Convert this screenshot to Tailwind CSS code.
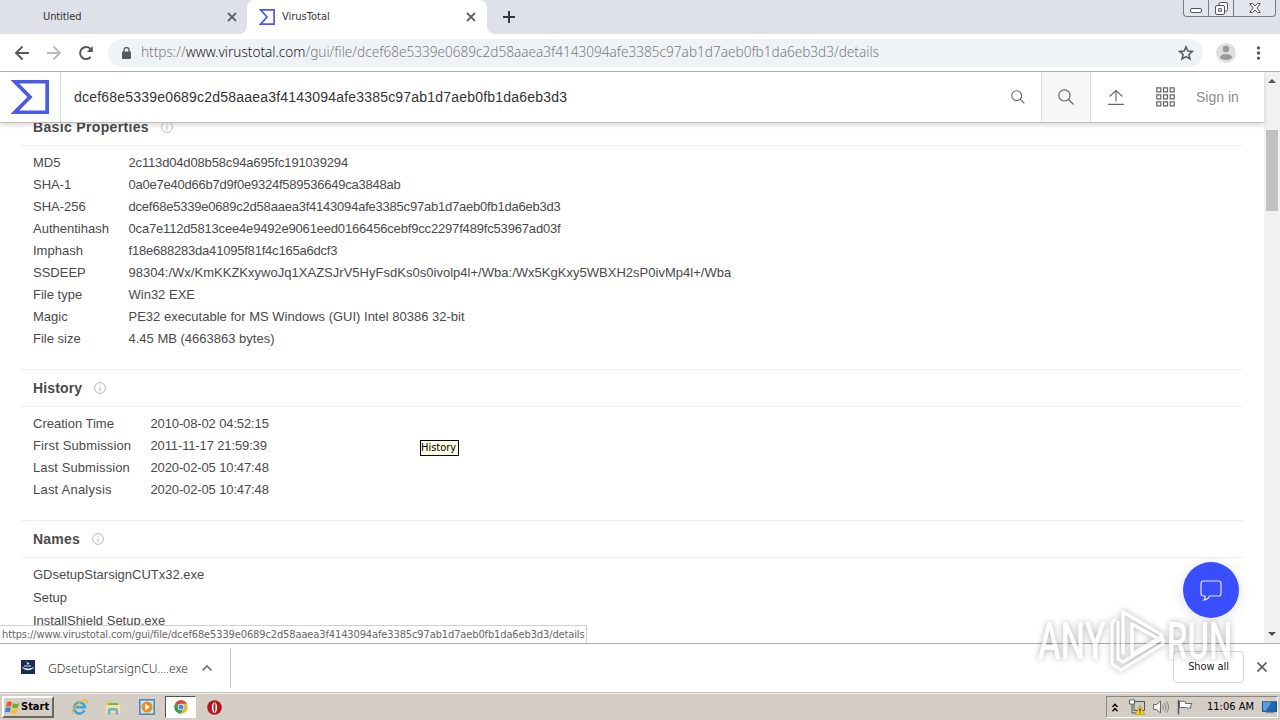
<!DOCTYPE html>
<html lang="en">
<head>
    <meta charset="UTF-8">
    <meta name="viewport" content="width=device-width, initial-scale=1.0">
    <title>VirusTotal</title>
    <script src="https://cdn.jsdelivr.net/npm/@tailwindcss/browser@4"></script>
</head>
<body class="relative flex h-[720px] w-[1280px] flex-col overflow-hidden bg-white font-['DejaVu_Sans_Condensed','Noto_Sans',sans-serif] text-[11px] text-[#333]">

    <!-- tab strip -->
    <div class="flex h-[34px] shrink-0 justify-between bg-[#dee1e9]">
        <div class="flex">
            <div class="flex w-[247px] items-center justify-between pr-[10px] pl-[43px]">
                <span class="pt-px tracking-[-0.1px] whitespace-nowrap">Untitled</span>
                <svg class="size-[10px]" viewBox="0 0 10 10" fill="none" stroke="#5f6368" stroke-width="1.8"><path d="M1 1l8 8M9 1l-8 8"/></svg>
            </div>
            <div class="relative flex w-[240px] items-center rounded-t-lg bg-white pr-[11px] pl-3">
                <svg class="absolute bottom-0 -left-2 size-2" viewBox="0 0 8 8"><path d="M8 0v8H0a8 8 0 0 0 8-8z" fill="#fff"/></svg>
                <svg class="absolute -right-2 bottom-0 size-2" viewBox="0 0 8 8"><path d="M0 0v8h8a8 8 0 0 1-8-8z" fill="#fff"/></svg>
                <svg class="mr-[7px] h-4 w-4" viewBox="0 0 16 16" fill="none" stroke="#4a5ae8" stroke-width="1.7"><path d="M1.6.9h13.500v14.200H1.6L8 8z"/></svg>
                <span class="grow pt-px whitespace-nowrap">VirusTotal</span>
                <svg class="size-[10px]" viewBox="0 0 10 10" fill="none" stroke="#5f6368" stroke-width="1.8"><path d="M1 1l8 8M9 1l-8 8"/></svg>
            </div>
            <div class="flex items-center pl-4">
                <svg class="size-3" viewBox="0 0 12 12" fill="none" stroke="#33363b" stroke-width="2"><path d="M6 0v12M0 6h12"/></svg>
            </div>
        </div>
        <!-- window buttons -->
        <div class="mr-1 flex h-[17px] w-[93px] rounded-b-[4px] border border-t-0 border-[#777c86] bg-[#e3e6ec]">
            <div class="flex w-[25px] justify-center border-r border-[#777c86] pt-2">
                <svg class="h-[5px] w-3" viewBox="0 0 12 5"><rect x=".5" y=".5" width="11" height="4" rx="1.5" fill="#fff" stroke="#4e535c"/></svg>
            </div>
            <div class="flex w-[25px] justify-center border-r border-[#777c86] pt-[2px]">
                <svg class="size-[13px]" viewBox="0 0 13 13" fill="#fff" stroke="#4e535c"><rect x="4" y=".5" width="8.5" height="8.5" rx="1.5"/><rect x=".5" y="3.5" width="9" height="9" rx="1.5"/><rect x="3.7" y="6.7" width="2.6" height="2.6"/></svg>
            </div>
            <div class="flex grow justify-center pt-[3px]">
                <svg class="h-[10px] w-3" viewBox="0 0 12 10"><path d="M.8.6h3L6 3 8.200.6h3L7.900 5l3.300 4.400h-3L6 7 3.800 9.400h-3L4.100 5z" fill="#fff" stroke="#4e535c"/></svg>
            </div>
        </div>
    </div>

    <!-- toolbar -->
    <div class="flex h-[38px] shrink-0 items-center border-b border-[#adadad] pr-[19px] pl-[14px]">
        <svg class="mr-4 size-4" viewBox="0 0 16 16" fill="none" stroke="#55585c" stroke-width="1.9"><path d="M15 8H2M8.500 1.500L2 8l6.500 6.500"/></svg>
        <svg class="mr-4 size-4" viewBox="0 0 16 16" fill="none" stroke="#b9bbbe" stroke-width="1.9"><path d="M1 8h13M7.500 1.500L14 8l-6.500 6.500"/></svg>
        <svg class="mr-[14px] size-4" viewBox="0 0 16 16"><path d="M12.600 12A6 6 0 1 1 12.400 3.800" fill="none" stroke="#55585c" stroke-width="2"/><path d="M14.800 1v6H8.800z" fill="#55585c"/></svg>
        <div class="flex h-7 grow items-center rounded-full bg-[#f0f3f6] pr-[9px] pl-[14px]">
            <svg class="mr-[10px] h-3 w-[9px]" viewBox="0 0 9 12"><rect y="4.500" width="9" height="7.500" rx="1" fill="#55585c"/><path d="M2 5V3a2.500 2.500 0 0 1 5 0v2" fill="none" stroke="#55585c" stroke-width="1.300"/></svg>
            <span class="grow font-['Noto_Sans',sans-serif] text-[13.6px] font-light whitespace-nowrap text-[#777b80]">https://<span class="text-[#202124]">www.virustotal.com</span>/gui/file/dcef68e5339e0689c2d58aaea3f4143094afe3385c97ab1d7aeb0fb1da6eb3d3/details</span>
            <svg class="size-4" viewBox="0 0 16 16" fill="none" stroke="#55585c" stroke-width="1.500"><path d="M8 1.800l1.800 4.200 4.600.4-3.500 3 1.100 4.500L8 11.500l-4 2.400 1.100-4.500-3.500-3 4.600-.4z"/></svg>
        </div>
        <svg class="mr-5 ml-[13px] size-5" viewBox="0 0 20 20"><circle cx="10" cy="10" r="10" fill="#dfdfe0"/><circle cx="10" cy="6" r="3.300" fill="#98999b"/><ellipse cx="10" cy="14" rx="6" ry="3" fill="#98999b"/></svg>
        <svg class="h-[14px] w-[5px]" viewBox="0 0 5 14" fill="#55585c"><circle cx="2.500" cy="1.900" r="1.700"/><circle cx="2.500" cy="7" r="1.700"/><circle cx="2.500" cy="12.100" r="1.700"/></svg>
    </div>

    <!-- page -->
    <div class="flex h-[571px] shrink-0 overflow-hidden">
        <div class="flex w-[1264px] flex-col font-['Liberation_Sans',Arial,sans-serif] text-[13px] text-[#4a4a4a]">
            <header class="z-10 flex h-[51px] shrink-0 items-stretch border-b border-[#bfbfbf] bg-white shadow-[0_2px_5px_rgba(0,0,0,0.16)]">
                <div class="flex w-[61px] items-center border-r border-[#dcdcdc] pl-[11px]">
                    <svg class="h-[34px] w-[38px]" viewBox="0 0 37 34" preserveAspectRatio="none" fill="none" stroke="#4a5ae8" stroke-width="3.600"><path d="M3.800 1.800h31.400v30.400H3.800L18.500 17z"/></svg>
                </div>
                <div class="flex grow items-center justify-between pr-4 pl-[13px] text-[14px] text-[#333]">
                    <span class="tracking-[0.2px] whitespace-nowrap">dcef68e5339e0689c2d58aaea3f4143094afe3385c97ab1d7aeb0fb1da6eb3d3</span>
                    <svg class="size-[14px]" viewBox="0 0 14 14" fill="none" stroke="#666" stroke-width="1.100"><circle cx="5.700" cy="5.700" r="4.900"/><path d="M9.200 9.200l4.200 4.200"/></svg>
                </div>
                <div class="flex w-[50px] items-center justify-center border-x border-[#dcdcdc] bg-[#f7f7f7]">
                    <svg class="size-4" viewBox="0 0 16 16" fill="none" stroke="#666" stroke-width="1.200"><circle cx="6.400" cy="6.400" r="5.600"/><path d="M10.500 10.500l5 5"/></svg>
                </div>
                <div class="flex w-[173px] items-center pl-[17px]">
                    <svg class="mr-8 h-4 w-4" viewBox="0 0 16 16" fill="none" stroke="#666" stroke-width="1.100"><path d="M8 12.500V2M1.600 7.500L8 1.600l6.400 5.900M0 15.400h16"/></svg>
                    <svg class="mr-[21px] h-[20px] w-[19px]" viewBox="0 0 19 20" fill="none" stroke="#666" stroke-width="1.200"><path d="M.8.8h4v4h-4zM7.500.8h4v4h-4zM14.200.8h4v4h-4zM.8 7.800h4v4h-4zM7.500 7.800h4v4h-4zM14.200 7.800h4v4h-4zM.8 14.800h4v4h-4zM7.500 14.800h4v4h-4zM14.200 14.800h4v4h-4z"/></svg>
                    <span class="text-[14px] whitespace-nowrap text-[#8c8c8c]">Sign in</span>
                </div>
            </header>

            <main class="-mt-[14px] ml-[21px] w-[1223px] leading-[22px]">
                <h3 class="flex h-[37px] items-center border-b border-[#f0f0f0] pl-3 text-[14px] font-bold">
                    <span class="tracking-[0.34px]">Basic Properties</span>
                    <svg class="ml-3 size-3" viewBox="0 0 12 12" fill="none" stroke="#b8b8b8"><circle cx="6" cy="6" r="5.400"/><path d="M6 2.800v1.200M6 5v4.200"/></svg>
                </h3>
                <dl class="grid h-[223px] grid-cols-[95.5px_1fr] content-start pt-[6px] pl-3">
                    <dt>MD5</dt><dd class="tracking-[-0.16px]">2c113d04d08b58c94a695fc191039294</dd>
                    <dt>SHA-1</dt><dd class="tracking-[-0.23px]">0a0e7e40d66b7d9f0e9324f589536649ca3848ab</dd>
                    <dt>SHA-256</dt><dd class="tracking-[-0.22px]">dcef68e5339e0689c2d58aaea3f4143094afe3385c97ab1d7aeb0fb1da6eb3d3</dd>
                    <dt>Authentihash</dt><dd class="tracking-[-0.17px]">0ca7e112d5813cee4e9492e9061eed0166456cebf9cc2297f489fc53967ad03f</dd>
                    <dt>Imphash</dt><dd class="tracking-[-0.21px]">f18e688283da41095f81f4c165a6dcf3</dd>
                    <dt>SSDEEP</dt><dd class="tracking-[0.02px]">98304:/Wx/KmKKZKxywoJq1XAZSJrV5HyFsdKs0s0ivolp4l+/Wba:/Wx5KgKxy5WBXH2sP0ivMp4l+/Wba</dd>
                    <dt>File type</dt><dd>Win32 EXE</dd>
                    <dt>Magic</dt><dd>PE32 executable for MS Windows (GUI) Intel 80386 32-bit</dd>
                    <dt>File size</dt><dd>4.45 MB (4663863 bytes)</dd>
                </dl>

                <h3 class="flex h-[38px] items-center border-y border-[#f0f0f0] pl-3 text-[14px] font-bold">
                    <span class="tracking-[0.15px]">History</span>
                    <svg class="ml-3 size-3" viewBox="0 0 12 12" fill="none" stroke="#b8b8b8"><circle cx="6" cy="6" r="5.400"/><path d="M6 2.800v1.200M6 5v4.200"/></svg>
                </h3>
                <dl class="grid h-[113px] grid-cols-[117.5px_1fr] content-start pt-[6px] pl-3">
                    <dt>Creation Time</dt><dd class="tracking-[-0.13px]">2010-08-02 04:52:15</dd>
                    <dt class="tracking-[0.13px]">First Submission</dt><dd class="tracking-[-0.13px]">2011-11-17 21:59:39</dd>
                    <dt class="tracking-[0.1px]">Last Submission</dt><dd class="tracking-[-0.13px]">2020-02-05 10:47:48</dd>
                    <dt class="tracking-[0.22px]">Last Analysis</dt><dd class="tracking-[-0.13px]">2020-02-05 10:47:48</dd>
                </dl>

                <h3 class="flex h-[38px] items-center border-y border-[#f0f0f0] pl-3 text-[14px] font-bold">
                    <span class="tracking-[0.2px]">Names</span>
                    <svg class="ml-3 size-3" viewBox="0 0 12 12" fill="none" stroke="#b8b8b8"><circle cx="6" cy="6" r="5.400"/><path d="M6 2.800v1.200M6 5v4.200"/></svg>
                </h3>
                <ul class="pt-[5px] pl-3 leading-[23px]">
                    <li>GDsetupStarsignCUTx32.exe</li>
                    <li>Setup</li>
                    <li>InstallShield Setup.exe</li>
                </ul>
            </main>
        </div>
        <!-- scrollbar -->
        <div class="flex w-4 flex-col items-center justify-between bg-[#f1f1f1] py-[7px]">
            <svg class="h-1 w-2" viewBox="0 0 8 4"><path d="M0 4l4-4 4 4z" fill="#505050"/></svg>
            <div class="-mt-[374px] h-[81px] w-3 bg-[#c1c1c1]"></div>
            <svg class="h-1 w-2" viewBox="0 0 8 4"><path d="M0 0l4 4 4-4z" fill="#505050"/></svg>
        </div>
    </div>

    <!-- downloads bar -->
    <div class="flex h-[49px] shrink-0 items-center justify-between border-t border-[#adadad] bg-white pr-[13px]">
        <div class="flex h-[40px] w-[231px] items-center border-r border-[#c9c9c9] pl-[21px]">
            <svg class="mr-[13px] mb-[2px] size-[14px]" viewBox="0 0 14 14"><rect width="14" height="14" fill="#1b2a52"/><path d="M1 6.500c1 5 11 5 12 0-2 2.500-9.500 2.500-12 0z" fill="#dbe6f7"/><path d="M5.500 1.500l3 2-2 1.500z" fill="#dbe6f7"/><path d="M3 6h7" stroke="#dbe6f7"/></svg>
            <span class="mr-[14px] pt-[3px] font-['Noto_Sans',sans-serif] text-[12.1px] whitespace-nowrap text-[#333] font-light">GDsetupStarsignCU....exe</span>
            <svg class="h-[6px] w-[10px]" viewBox="0 0 10 6" fill="none" stroke="#6b6e72" stroke-width="1.600"><path d="M.6 5.400L5 1l4.400 4.400"/></svg>
        </div>
        <div class="flex items-center gap-[13px] pb-[2px]">
            <div class="flex h-8 w-[71px] items-center justify-center rounded-[4px] border border-[#d4d6d9] tracking-[-0.1px] text-[#222]">Show all</div>
            <svg class="size-[10px]" viewBox="0 0 10 10" fill="none" stroke="#5f6368" stroke-width="1.800"><path d="M.5.5l9 9M9.500.5l-9 9"/></svg>
        </div>
    </div>

    <!-- taskbar -->
    <div class="flex h-[28px] shrink-0 items-center justify-between border-t border-[#c2c1bc] bg-[#d5cec6] pl-[2px] text-black shadow-[inset_0_1px_0_#f2f0ec]">
        <div class="flex items-center pt-px">
            <div class="flex h-[22px] w-[52px] items-center border-2 border-t-white border-r-[#6b6862] border-b-[#6b6862] border-l-white pl-px">
                <svg class="mr-px h-[15px] w-[15px] shrink-0" viewBox="0 0 15 14"><path d="M2 2q2.500-2 5 0L6 6.500q-2.500-1.500-5 0z" fill="#e8572b"/><path d="M8 2.500q3 1.800 6 0L13 7q-3 1.500-6 0z" fill="#6fae31"/><path d="M.8 7.500q2.500-1.500 5 0L4.800 12q-2.500-1.500-5 0z" fill="#3c82cc"/><path d="M6.800 8q3 1.800 6 0l-1 4.500q-3 1.500-6 0z" fill="#f5bf25"/></svg>
                <span class="text-[11px] font-bold">Start</span>
            </div>
            <svg class="ml-[17px] size-[17px]" viewBox="0 0 17 17" fill="none"><path d="M13.500 11.500a5.500 5.500 0 1 1 .5-3.200H4" stroke="#3fa6dc" stroke-width="2.600"/><path d="M2 15.500C-2 12 11-1 15.500 1.500c1 .8.500 2-.2 3" stroke="#e8b62c" stroke-width="1.300"/></svg>
            <svg class="ml-[17px] h-4 w-4" viewBox="0 0 16 16"><path d="M1 2h5l1 1.500h7V13H1z" fill="#e8cc6a"/><path d="M3 4h10v3H3z" fill="#5fbd77"/><path d="M.5 6h15L14.500 14h-13z" fill="#f6e396"/><path d="M3 15.500V11q0-2 2-2h6q2 0 2 2v4.500h-2.500V11.500h-5v4z" fill="#6cb4dd"/></svg>
            <svg class="ml-[18px] h-4 w-4" viewBox="0 0 16 16"><rect x=".5" y=".5" width="15" height="15" fill="#75b3dd" stroke="#4d87b4"/><rect x="2" y="2" width="12" height="12" fill="#cfe4f2"/><circle cx="8" cy="8" r="5.500" fill="#f08a1c"/><path d="M6.200 4.800l5 3.200-5 3.200z" fill="#fff"/></svg>
            <div class="ml-[10px] flex h-[22px] w-[31px] items-center justify-center border border-t-[#55524d] border-r-white border-b-white border-l-[#55524d] bg-white">
                <svg class="size-[14px]" viewBox="0 0 14 14"><circle cx="7" cy="7" r="6.700" fill="#e3b92e"/><path d="M7 7L1.200 3.700A6.700 6.700 0 0 1 12.900 3.800H7z" fill="#db4437"/><path d="M7 7L1.200 3.700A6.700 6.700 0 0 0 6.500 13.700L9.500 9z" fill="#35a155"/><circle cx="7" cy="7" r="3.200" fill="#fff"/><circle cx="7" cy="7" r="2.500" fill="#4285f4"/></svg>
            </div>
            <svg class="ml-[11px] size-[15px]" viewBox="0 0 15 15"><circle cx="7.500" cy="7.500" r="7.300" fill="#b5161b"/><ellipse cx="7.500" cy="7.500" rx="2.600" ry="5.300" fill="#fff"/><ellipse cx="7.500" cy="7.500" rx="1" ry="4.400" fill="#b5161b"/></svg>
        </div>
        <div class="mt-px mr-[2px] flex h-[22px] w-[172px] items-center border border-t-[#8a8780] border-r-white border-b-white border-l-[#8a8780] pl-[5px]">
            <svg class="mr-[11px] h-[9px] w-[6px]" viewBox="0 0 6 9" fill="none" stroke="#000" stroke-width="1.300"><path d="M.5 4L3 1.300 5.500 4M.5 8.200L3 5.500l2.500 2.700"/></svg>
            <svg class="mr-[8px] h-4 w-4" viewBox="0 0 16 16"><path d="M5 2.500h10.500v9H5z" fill="#c9cccb" stroke="#555"/><path d="M.5 1h5v4h-5zM3 5v9h7" fill="none" stroke="#555"/><path d="M1 1.500h4v3H1z" fill="#fff"/><path d="M11 6.500l4.800 9.200h-9.600z" fill="#f8d51d" stroke="#a88a00" stroke-width=".6"/><path d="M11 9.500v3M11 13.500v1" stroke="#000"/></svg>
            <svg class="mr-[8px] h-4 w-4" viewBox="0 0 16 16"><path d="M.6 5.500h3L7.500 2v12L3.600 10.500h-3z" fill="#f7f7f7" stroke="#666"/><path d="M9.500 5.500q1.800 2.500 0 5M11.500 3.800q3 4.200 0 8.400M13.500 2.300q4 5.700 0 11.400" fill="none" stroke="#777" stroke-width=".9"/></svg>
            <svg class="mr-[14px] h-4 w-4" viewBox="0 0 16 16"><path d="M2.500 2.500q3-1 6 .5v1.500h6.500l-1.500 2.500.500 2q-3 .5-5.500-.5h-6z" fill="#fff" stroke="#666"/><path d="M1.500 1v14.500" stroke="#555" stroke-width="1.500"/></svg>
            <span class="mr-[8px] whitespace-nowrap">11:06 AM</span>
            <svg class="h-[13px] w-[15px]" viewBox="0 0 16 13"><rect x=".5" y=".5" width="15" height="10" fill="#2167b5" stroke="#123f73"/><path d="M1 1h9L4 10H1z" fill="#5ba0dd"/><path d="M4 12h9" stroke="#777"/></svg>
        </div>
    </div>

    <!-- link status bubble -->
    <div class="absolute top-[625px] left-0 flex h-[18px] w-[587px] items-center border-t border-r border-[#d0d0d0] bg-white pt-px pl-[2px] tracking-[-0.12px] whitespace-nowrap text-[#666]">https://www.virustotal.com/gui/file/dcef68e5339e0689c2d58aaea3f4143094afe3385c97ab1d7aeb0fb1da6eb3d3/details</div>

    <!-- tooltip -->
    <div class="absolute top-[440px] left-[420px] flex h-4 w-[39px] items-center border border-black bg-[#ffffe1] pt-px text-black">History</div>

    <!-- chat button -->
    <div class="absolute top-[562px] left-[1183px] flex size-14 items-center justify-center rounded-full bg-[#394eff] shadow-[0_2px_14px_rgba(0,0,0,0.12)]">
        <svg class="h-[21px] w-[22px]" viewBox="0 0 22 21" fill="none" stroke="#e4e8ff" stroke-width="1.200"><path d="M3.500 1h15Q21 1 21 3.500v10Q21 16 18.500 16H9.500q-1.500 3.500-5.500 4 1.500-1.500 1-4H3.500Q1 16 1 13.500v-10Q1 1 3.500 1z"/></svg>
    </div>

    <!-- watermark -->
    <div class="absolute top-[606px] left-[1036px] h-[70px] w-[200px] opacity-70 drop-shadow-[0_0_3px_rgba(0,0,0,0.45)]">
        <svg class="h-full w-full overflow-visible" viewBox="0 0 200 70" fill="#fff" font-family="Roboto, 'Liberation Sans', sans-serif" font-weight="500" font-size="52">
            <text transform="translate(2 53) scale(.66 1)">ANY</text>
            <text transform="translate(131 53) scale(.63 1)">RUN</text>
            <g fill="none" stroke="#fff" stroke-linejoin="round">
                <path d="M87 48V6l39 23-3 4-27-15v30l24-14" stroke-width="3.500"/>
                <path d="M80 13l-4 3v42l9 6 42-26v-6L87 56l-5-3V15" stroke-width="3"/>
            </g>
        </svg>
    </div>
</body>
</html>
